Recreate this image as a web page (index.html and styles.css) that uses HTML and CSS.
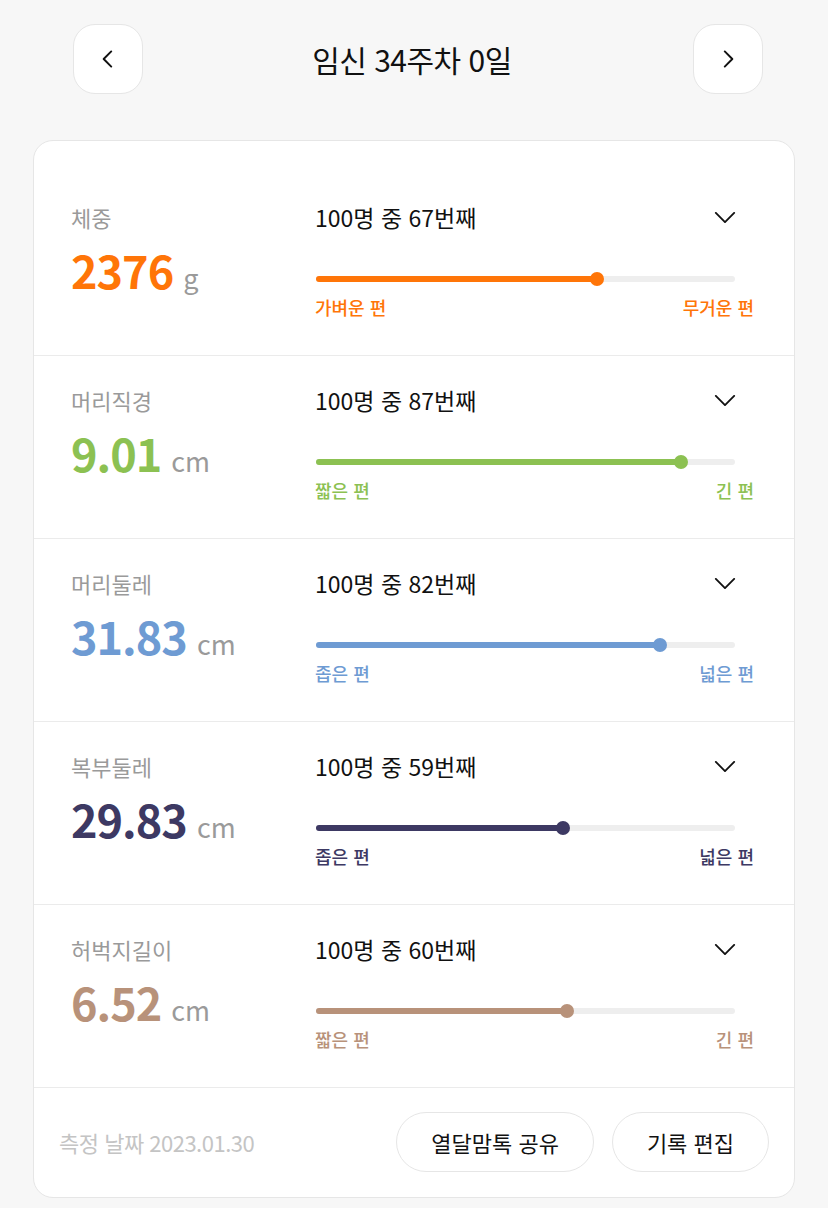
FILE: index.html
```html
<!DOCTYPE html>
<html lang="ko">
<head>
    <meta charset="UTF-8">
    <meta name="viewport" content="width=device-width, initial-scale=1.0">
    <title>태아 성장 기록</title>
    <link rel="stylesheet" href="styles.css">
</head>
<body>

    <!-- 아이콘 -->
    <svg width="0" height="0" style="position:absolute">
        <defs>
            <symbol id="icon-prev" viewBox="0 0 24 24" fill="none" stroke="currentColor" stroke-width="1.8" stroke-linecap="round" stroke-linejoin="round"><polyline points="15,5 8,12 15,19"></polyline></symbol>
            <symbol id="icon-next" viewBox="0 0 24 24" fill="none" stroke="currentColor" stroke-width="1.8" stroke-linecap="round" stroke-linejoin="round"><polyline points="9,5 16,12 9,19"></polyline></symbol>
            <symbol id="icon-down" viewBox="0 0 24 12" fill="none" stroke="currentColor" stroke-width="2" stroke-linecap="round" stroke-linejoin="round"><polyline points="2,1 12,11 22,1"></polyline></symbol>
        </defs>
    </svg>

    <div class="week-nav">
        <button class="nav-btn" type="button"><svg class="nav-icon"><use href="#icon-prev"/></svg></button>
        <h1 class="week-title">임신 34주차 0일</h1>
        <button class="nav-btn" type="button"><svg class="nav-icon"><use href="#icon-next"/></svg></button>
    </div>

    <div class="record-card">
        <div class="stat-row weight">
            <div class="stat-info">
                <p class="stat-label">체중</p>
                <p class="stat-value"><strong>2376</strong><span>g</span></p>
            </div>
            <div class="stat-rank">
                <div class="rank-head">
                    <p>100명 중 67번째</p>
                    <svg class="down-icon"><use href="#icon-down"/></svg>
                </div>
                <div class="track"><div class="fill" style="width: 67%"></div></div>
                <div class="scale"><span>가벼운 편</span><span>무거운 편</span></div>
            </div>
        </div>

        <div class="stat-row bpd">
            <div class="stat-info">
                <p class="stat-label">머리직경</p>
                <p class="stat-value"><strong>9.01</strong><span>cm</span></p>
            </div>
            <div class="stat-rank">
                <div class="rank-head">
                    <p>100명 중 87번째</p>
                    <svg class="down-icon"><use href="#icon-down"/></svg>
                </div>
                <div class="track"><div class="fill" style="width: 87%"></div></div>
                <div class="scale"><span>짧은 편</span><span>긴 편</span></div>
            </div>
        </div>

        <div class="stat-row hc">
            <div class="stat-info">
                <p class="stat-label">머리둘레</p>
                <p class="stat-value"><strong>31.83</strong><span>cm</span></p>
            </div>
            <div class="stat-rank">
                <div class="rank-head">
                    <p>100명 중 82번째</p>
                    <svg class="down-icon"><use href="#icon-down"/></svg>
                </div>
                <div class="track"><div class="fill" style="width: 82%"></div></div>
                <div class="scale"><span>좁은 편</span><span>넓은 편</span></div>
            </div>
        </div>

        <div class="stat-row ac">
            <div class="stat-info">
                <p class="stat-label">복부둘레</p>
                <p class="stat-value"><strong>29.83</strong><span>cm</span></p>
            </div>
            <div class="stat-rank">
                <div class="rank-head">
                    <p>100명 중 59번째</p>
                    <svg class="down-icon"><use href="#icon-down"/></svg>
                </div>
                <div class="track"><div class="fill" style="width: 59%"></div></div>
                <div class="scale"><span>좁은 편</span><span>넓은 편</span></div>
            </div>
        </div>

        <div class="stat-row fl">
            <div class="stat-info">
                <p class="stat-label">허벅지길이</p>
                <p class="stat-value"><strong>6.52</strong><span>cm</span></p>
            </div>
            <div class="stat-rank">
                <div class="rank-head">
                    <p>100명 중 60번째</p>
                    <svg class="down-icon"><use href="#icon-down"/></svg>
                </div>
                <div class="track"><div class="fill" style="width: 60%"></div></div>
                <div class="scale"><span>짧은 편</span><span>긴 편</span></div>
            </div>
        </div>

        <div class="card-footer">
            <p class="measure-date">측정 날짜 2023.01.30</p>
            <div class="footer-actions">
                <button class="pill-btn" type="button">열달맘톡 공유</button>
                <button class="pill-btn" type="button">기록 편집</button>
            </div>
        </div>
    </div>

</body>
</html>
```

FILE: styles.css
```css
/* --- 기본 설정 --- */
:root {
    --bg-color: #F7F7F7;
    --surface-color: #FFFFFF;
    --text-primary: #111111;
    --text-secondary: #9A9A9A;
    --text-muted: #C4C4C4;
    --border-color: #E6E6E6;
    --line-color: #EBEBEB;
    --track-color: #EEEEEE;
}
* { margin: 0; padding: 0; box-sizing: border-box; }
body {
    font-family: "Noto Sans CJK KR", "Noto Sans", sans-serif;
    background-color: var(--bg-color);
    color: var(--text-primary);
    padding: 24px 33px 40px;
}

/* --- 주차 이동 --- */
.week-nav {
    display: flex;
    align-items: center;
    justify-content: space-between;
    padding: 0 32px 0 40px;
    margin-bottom: 46px;
}
.nav-btn {
    width: 70px;
    height: 70px;
    border-radius: 22px;
    background-color: var(--surface-color);
    border: 1px solid var(--border-color);
    display: flex;
    align-items: center;
    justify-content: center;
    color: var(--text-primary);
}
.nav-icon { width: 26px; height: 26px; }
.week-title { font-size: 30px; font-weight: 400; letter-spacing: -0.5px; margin-right: 12px; }

/* --- 기록 카드 --- */
.record-card {
    background-color: var(--surface-color);
    border: 1px solid var(--border-color);
    border-radius: 20px;
    padding-top: 32px;
}
.stat-row {
    display: flex;
    padding: 29px 40px 36px 37px;
    border-bottom: 1px solid var(--line-color);
}
.stat-info { width: 244px; }
.stat-label { font-size: 22px; line-height: 30px; color: var(--text-secondary); }
.stat-value { display: flex; align-items: baseline; gap: 10px; margin-top: 12px; line-height: 52px; }
.stat-value strong { font-size: 45px; font-weight: 700; letter-spacing: -1px; }
.stat-value span { font-size: 27px; color: var(--text-secondary); }

.stat-rank { flex: 1; }
.rank-head { display: flex; align-items: center; justify-content: space-between; padding-right: 18px; }
.rank-head p { font-size: 23px; line-height: 30px; }
.down-icon { width: 22px; height: 11px; }

.track {
    margin: 44px 19px 4px 1px;
    height: 6px;
    border-radius: 3px;
    background-color: var(--track-color);
}
.fill { height: 6px; border-radius: 3px; background-color: var(--accent); position: relative; }
.fill::after {
    content: "";
    position: absolute;
    right: -7px;
    top: -4px;
    width: 14px;
    height: 14px;
    border-radius: 50%;
    background-color: var(--accent);
}
.scale {
    display: flex;
    justify-content: space-between;
    margin-top: 13px;
    font-size: 18px;
    line-height: 24px;
    font-weight: 500;
    color: var(--accent);
}

.weight { --accent: #FF7508; }
.bpd { --accent: #8CC152; }
.hc { --accent: #6E9BD3; }
.ac { --accent: #3D3963; }
.fl { --accent: #B8927A; }
.stat-value strong { color: var(--accent); }

/* --- 하단 --- */
.card-footer {
    display: flex;
    align-items: center;
    justify-content: space-between;
    padding: 24px 25px 25px;
}
.measure-date { font-size: 22px; color: var(--text-muted); letter-spacing: -0.5px; }
.footer-actions { display: flex; gap: 18px; }
.pill-btn {
    height: 60px;
    padding: 0 34px;
    border-radius: 30px;
    border: 1px solid var(--border-color);
    background-color: var(--surface-color);
    font-family: inherit;
    font-size: 22px;
    color: var(--text-primary);
}
```
